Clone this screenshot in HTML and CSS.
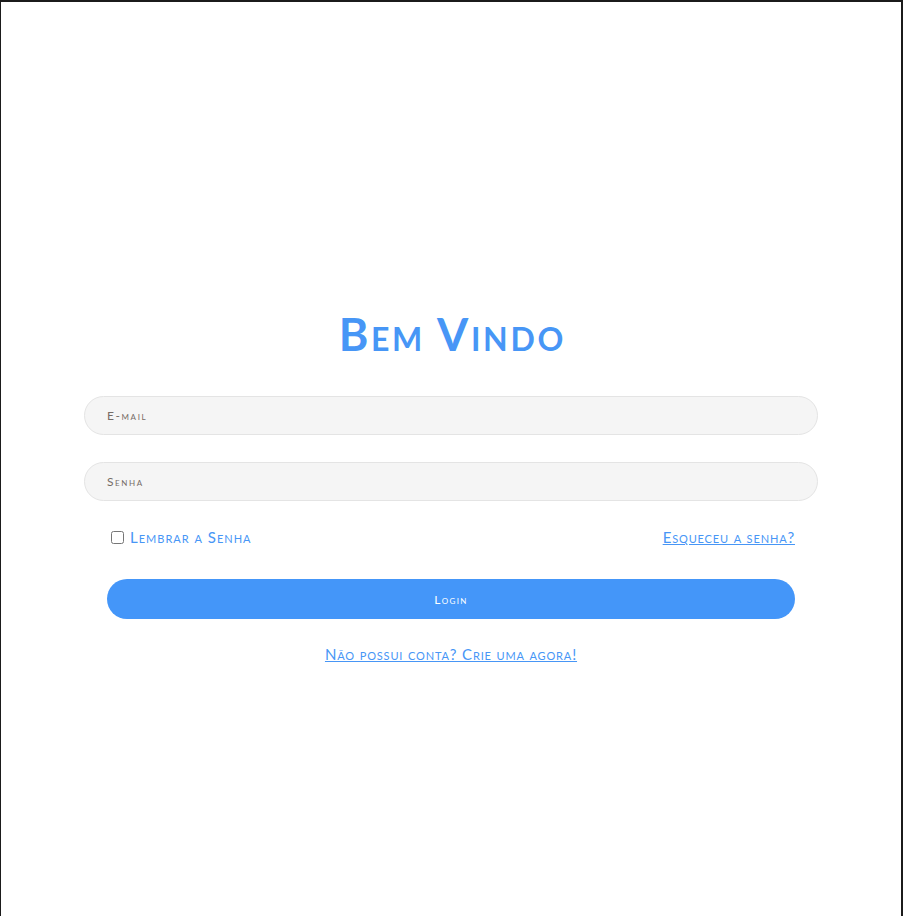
FILE: index.html
```html
<!DOCTYPE html>
<html lang="pt-BR">
<head>
<meta charset="utf-8">
<title>Bem Vindo</title>
<link rel="stylesheet" href="styles.css">
</head>
<body>
<div class="frame">
  <main class="card">
    <h1 class="title">Bem Vindo</h1>
    <form class="form">
      <input class="field" type="email" placeholder="E-mail">
      <input class="field" type="password" placeholder="Senha">
      <div class="options">
        <label class="remember"><input type="checkbox" class="check"><span>Lembrar a Senha</span></label>
        <a class="link" href="#">Esqueceu a senha?</a>
      </div>
      <button type="button" class="btn">Login</button>
      <a class="link signup" href="#">Não possui conta? Crie uma agora!</a>
    </form>
  </main>
</div>
</body>
</html>
```
FILE: styles.css
```css
html, body {
  margin: 0;
  padding: 0;
  background: #1b1b1b;
}
body {
  font-family: Lato, "Open Sans", "Noto Sans", sans-serif;
  font-variant: small-caps;
}
.frame {
  margin: 2px 2px 0 1px;
  height: 914px;
  background: #ffffff;
  display: flex;
  justify-content: center;
}
.card {
  width: 734px;
  padding-top: 307px;
}
.title {
  margin: 0 0 37px;
  padding-left: 2.7px;
  text-align: center;
  font-size: 45px;
  line-height: 50px;
  font-weight: 700;
  letter-spacing: 2.7px;
  color: #4796f6;
}
.form {
  display: flex;
  flex-direction: column;
}
.field {
  box-sizing: border-box;
  height: 39px;
  margin: 0 0 27px;
  padding: 0 22px;
  border: 1px solid #e4e4e4;
  border-radius: 20px;
  background: #f5f5f5;
  font-family: inherit;
  font-variant: small-caps;
  font-size: 12px;
  letter-spacing: 1.6px;
  color: #555;
  outline: none;
}
.field::placeholder {
  color: #756c66;
}
.options {
  display: flex;
  justify-content: space-between;
  align-items: center;
  padding: 0 23px;
  margin-top: -2px;
  height: 22px;
}
.remember {
  display: flex;
  align-items: center;
  color: #4796f6;
  font-size: 15px;
  letter-spacing: 1px;
}
.check {
  margin: 0 6px 0 4px;
  width: 13px;
  height: 13px;
}
.link {
  color: #4796f6;
  font-size: 15px;
  letter-spacing: 0.85px;
}
.btn {
  margin: 31px 23px 0;
  height: 40px;
  border: none;
  border-radius: 20px;
  background: #4496f9;
  color: #ffffff;
  font-family: inherit;
  font-variant: small-caps;
  font-size: 12px;
  letter-spacing: 1.3px;
}
.signup {
  align-self: center;
  margin-top: 26px;
}
```
